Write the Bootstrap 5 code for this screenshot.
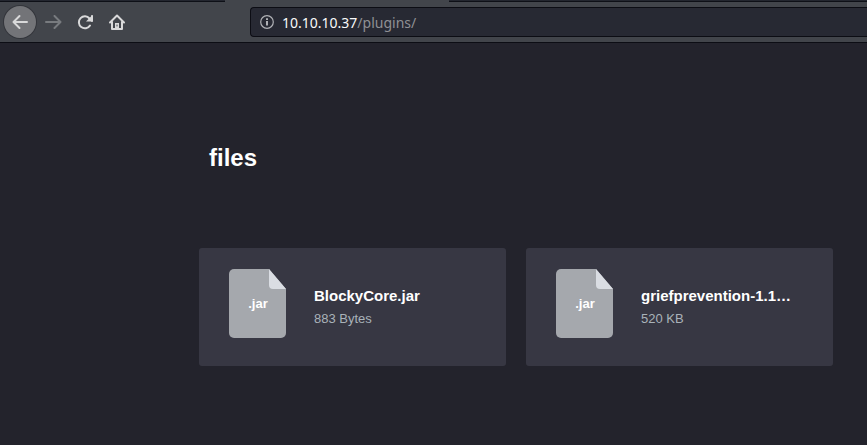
<!DOCTYPE html>
<html lang="en">
<head>
<meta charset="utf-8">
<meta name="viewport" content="width=device-width, initial-scale=1">
<title>files</title>
<link href="https://cdn.jsdelivr.net/npm/bootstrap@5.3.0/dist/css/bootstrap.min.css" rel="stylesheet">
<style>
body { background: #23232c; font-family: "Liberation Sans", Arial, sans-serif; color: #fff; overflow-x: hidden; }
.tab-strip { height: 2px; background: #23262f; border-bottom: 1px solid #0e1017; }
.tab-active { width: 224px; height: 2px; margin-left: 225px; background: #42454b; }
.toolbar { height: 41px; padding-left: 4px; background: #42454b; border-bottom: 1px solid #0c0d14; }
.tool-btn { width: 32px; height: 32px; color: #d9d9da; background: none; }
.tool-btn svg { display: block; }
.tool-back { background: #737478; box-shadow: 0 0 0 1px #33353b; }
.tool-btn:disabled { color: #96989b; }
.address { height: 30px; margin-left: 118px; padding-left: 9px; background: #272933; border: 1px solid #0c0d14; border-right: 0; border-radius: 4px 0 0 4px; font: 14px/28px "Noto Sans", sans-serif; color: #8f9094; }
.address a { color: inherit; padding-top: 1px; }
.address-host { color: #f9f9fa; }
.page { padding: 99px 34px 79px 199px; }
.page-title { font-size: 24px; line-height: 32px; margin: 0 10px 74px; }
.file-grid { gap: 20px; }
.file-card { height: 118px; padding: 20px 30px; background: #373743; border-radius: 3px; color: #fff; }
.file-icon { flex: none; width: 57px; height: 69px; margin-top: 1px; }
.file-icon text { font: bold 13px "Liberation Sans", Arial, sans-serif; }
.file-info { width: 158px; margin: 19px 0 0 28px; }
.file-name { font-size: 15px; line-height: 18px; }
.file-size { font-size: 13px; line-height: 18px; margin-top: 5px; color: #a9b2b9; }
</style>
<script defer src="https://cdn.jsdelivr.net/npm/bootstrap@5.3.0/dist/js/bootstrap.bundle.min.js"></script>
</head>
<body>
<header>
  <div class="tab-strip"><div class="tab-active"></div></div>
  <nav class="toolbar d-flex align-items-center" aria-label="Browser">
    <button type="button" class="tool-btn tool-back btn rounded-circle border-0 p-2" aria-label="Back">
      <svg width="16" height="16" viewBox="0 0 16 16" fill="none" stroke="currentColor" stroke-width="2" stroke-linecap="round" stroke-linejoin="round"><path d="M15 8H1.500M7.500 2L1.500 8l6 6"/></svg>
    </button>
    <button type="button" class="tool-btn btn rounded-circle border-0 p-2" aria-label="Forward" disabled>
      <svg width="18" height="16" viewBox="0 0 18 16" fill="none" stroke="currentColor" stroke-width="2" stroke-linecap="round" stroke-linejoin="round"><path d="M2 8h14M10.500 2l6 6-6 6"/></svg>
    </button>
    <button type="button" class="tool-btn btn border-0 p-2" aria-label="Reload">
      <svg width="18" height="16" viewBox="0 0 18 16" fill="none" stroke="currentColor" stroke-width="2" stroke-linecap="round"><path d="M14 11.500A6 6 0 1 1 13.500 4.500"/><path d="M16.500 1v6.500H10z" fill="currentColor" stroke="none"/><path d="M16 2v5"/></svg>
    </button>
    <button type="button" class="tool-btn btn border-0 p-2" aria-label="Home">
      <svg width="18" height="16" viewBox="0 0 18 16" fill="none" stroke="currentColor" stroke-width="2" stroke-linecap="round" stroke-linejoin="round"><path d="M2 8.500L9 1.500l7 7M4 8v7h10V8"/><path d="M7 15V9h4v6z" fill="currentColor" stroke="none"/><path d="M9 11v1" stroke="#42454b" stroke-width="1"/></svg>
    </button>
    <div class="address d-flex align-items-center flex-grow-1">
      <svg width="14" height="14" viewBox="0 0 14 14" fill="none" stroke="#b0b1b5" aria-hidden="true"><circle cx="7" cy="7" r="6.300" stroke-width="1.200"/><path d="M7 6v4.500M7 3.300v1.600" stroke-width="2"/></svg>
      <a class="text-decoration-none ms-2" href="#"><span class="address-host">10.10.10.37</span>/plugins/</a>
    </div>
  </nav>
</header>
<main class="page">
  <h1 class="page-title fw-bold">files</h1>
  <div class="file-grid d-flex">
    <a href="#" class="file-card d-flex align-items-start flex-fill text-decoration-none">
      <svg class="file-icon" viewBox="0 0 57 69" aria-hidden="true"><path d="M5 0h35l17 20v44a5 5 0 0 1-5 5H5a5 5 0 0 1-5-5V5a5 5 0 0 1 5-5z" fill="#a5a8ad"/><path d="M40 0l17 20H44a4 4 0 0 1-4-4z" fill="#dadde3"/><text x="29" y="39" text-anchor="middle" fill="#fff">.jar</text></svg>
      <div class="file-info">
        <div class="file-name fw-bold text-truncate">BlockyCore.jar</div>
        <div class="file-size">883 Bytes</div>
      </div>
    </a>
    <a href="#" class="file-card d-flex align-items-start flex-fill text-decoration-none">
      <svg class="file-icon" viewBox="0 0 57 69" aria-hidden="true"><path d="M5 0h35l17 20v44a5 5 0 0 1-5 5H5a5 5 0 0 1-5-5V5a5 5 0 0 1 5-5z" fill="#a5a8ad"/><path d="M40 0l17 20H44a4 4 0 0 1-4-4z" fill="#dadde3"/><text x="29" y="39" text-anchor="middle" fill="#fff">.jar</text></svg>
      <div class="file-info">
        <div class="file-name fw-bold text-truncate">griefprevention-1.1…</div>
        <div class="file-size">520 KB</div>
      </div>
    </a>
  </div>
</main>
</body>
</html>
